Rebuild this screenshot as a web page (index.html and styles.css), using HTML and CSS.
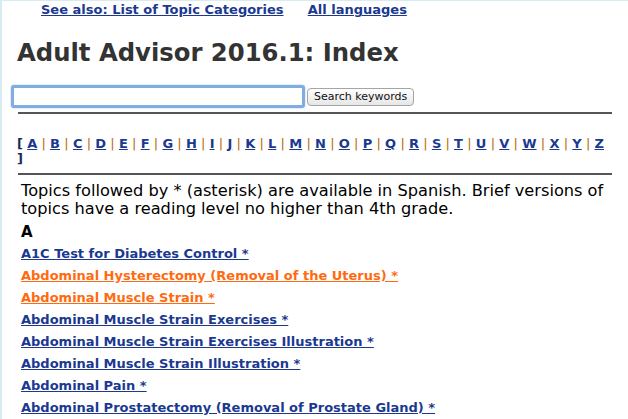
FILE: index.html
```html
<!DOCTYPE html>
<html lang="en">
<head>
    <meta charset="UTF-8">
    <title>Adult Advisor 2016.1: Index</title>
    <link rel="stylesheet" href="styles.css">
</head>
<body>
    <div class="page">
        <div class="top-links">
            <a href="#">See also: List of Topic Categories</a>
            <a href="#">All languages</a>
        </div>

        <h1>Adult Advisor 2016.1: Index</h1>

        <form class="search-form">
            <input type="text" class="search-box">
            <button type="button" class="search-button">Search keywords</button>
        </form>

        <hr>

        <div class="letters">
            [ <a href="#">A</a> <span class="sep">|</span> <a href="#">B</a> <span class="sep">|</span> <a href="#">C</a> <span class="sep">|</span> <a href="#">D</a> <span class="sep">|</span> <a href="#">E</a> <span class="sep">|</span> <a href="#">F</a> <span class="sep">|</span> <a href="#">G</a> <span class="sep">|</span> <a href="#">H</a> <span class="sep">|</span> <a href="#">I</a> <span class="sep">|</span> <a href="#">J</a> <span class="sep">|</span> <a href="#">K</a> <span class="sep">|</span> <a href="#">L</a> <span class="sep">|</span> <a href="#">M</a> <span class="sep">|</span> <a href="#">N</a> <span class="sep">|</span> <a href="#">O</a> <span class="sep">|</span> <a href="#">P</a> <span class="sep">|</span> <a href="#">Q</a> <span class="sep">|</span> <a href="#">R</a> <span class="sep">|</span> <a href="#">S</a> <span class="sep">|</span> <a href="#">T</a> <span class="sep">|</span> <a href="#">U</a> <span class="sep">|</span> <a href="#">V</a> <span class="sep">|</span> <a href="#">W</a> <span class="sep">|</span> <a href="#">X</a> <span class="sep">|</span> <a href="#">Y</a> <span class="sep">|</span> <a href="#">Z</a> ]
        </div>

        <hr>

        <div class="content">
            <p class="note">Topics followed by * (asterisk) are available in Spanish. Brief versions of topics have a reading level no higher than 4th grade.</p>

            <h2>A</h2>

            <ul class="topics">
                <li><a href="#">A1C Test for Diabetes Control *</a></li>
                <li><a href="#" class="visited">Abdominal Hysterectomy (Removal of the Uterus) *</a></li>
                <li><a href="#" class="visited">Abdominal Muscle Strain *</a></li>
                <li><a href="#">Abdominal Muscle Strain Exercises *</a></li>
                <li><a href="#">Abdominal Muscle Strain Exercises Illustration *</a></li>
                <li><a href="#">Abdominal Muscle Strain Illustration *</a></li>
                <li><a href="#">Abdominal Pain *</a></li>
                <li><a href="#">Abdominal Prostatectomy (Removal of Prostate Gland) *</a></li>
            </ul>
        </div>
    </div>
</body>
</html>
```

FILE: styles.css
```css
html {
    background-color: #fff;
}
body {
    margin: 0;
    border-left: 2px solid #d6ebf2;
    border-top: 1px solid #d6ebf2;
    font-family: "DejaVu Sans", Verdana, sans-serif;
    color: #000;
    min-height: 100vh;
    box-sizing: border-box;
}
a {
    color: #1b3990;
    font-weight: bold;
}
a.visited {
    color: #ff6a10;
}
.page {
    padding: 0 16px 0 14px;
}
.top-links {
    padding-left: 25px;
    font-size: 13px;
    line-height: 18px;
}
.top-links a {
    margin-right: 20px;
}
h1 {
    margin: 18px 0 0 1px;
    font-size: 24.3px;
    line-height: 32px;
    color: #333;
}
.search-form {
    display: flex;
    align-items: center;
    margin: 16px 0 0 -5px;
}
.search-box {
    width: 284px;
    height: 15px;
    margin: 0 2px 0 0;
    padding: 1px 2px;
    border: 3px solid #80ade0;
    border-radius: 3px;
    box-shadow: 0 0 2px #9ec3ee;
    outline: none;
}
.search-button {
    height: 18px;
    padding: 0 6px;
    font-family: "DejaVu Sans", sans-serif;
    font-size: 11px;
    color: #111;
    background: linear-gradient(#fff, #e6e6e6);
    border: 1px solid #a5a5a5;
    border-radius: 4px;
}
hr {
    margin: 4px 0 0 2px;
    border: none;
    border-top: 2px solid #555;
}
.letters {
    margin: 22px 0 0 1px;
    font-size: 13px;
    line-height: 15px;
    font-weight: bold;
    word-spacing: -0.3px;
    color: #1b2a55;
}
.letters .sep {
    color: #b86b00;
    font-weight: normal;
}
.letters + hr {
    margin-top: 7px;
}
.content {
    padding-left: 5px;
}
.note {
    margin: 7px 0 0 0;
    font-size: 16.2px;
    line-height: 18px;
}
h2 {
    margin: 4px 0 0 0;
    font-size: 15px;
    line-height: 20px;
}
.topics {
    list-style: none;
    margin: 1px 0 0 0;
    padding: 0;
    font-size: 13px;
    line-height: 22px;
}
```
